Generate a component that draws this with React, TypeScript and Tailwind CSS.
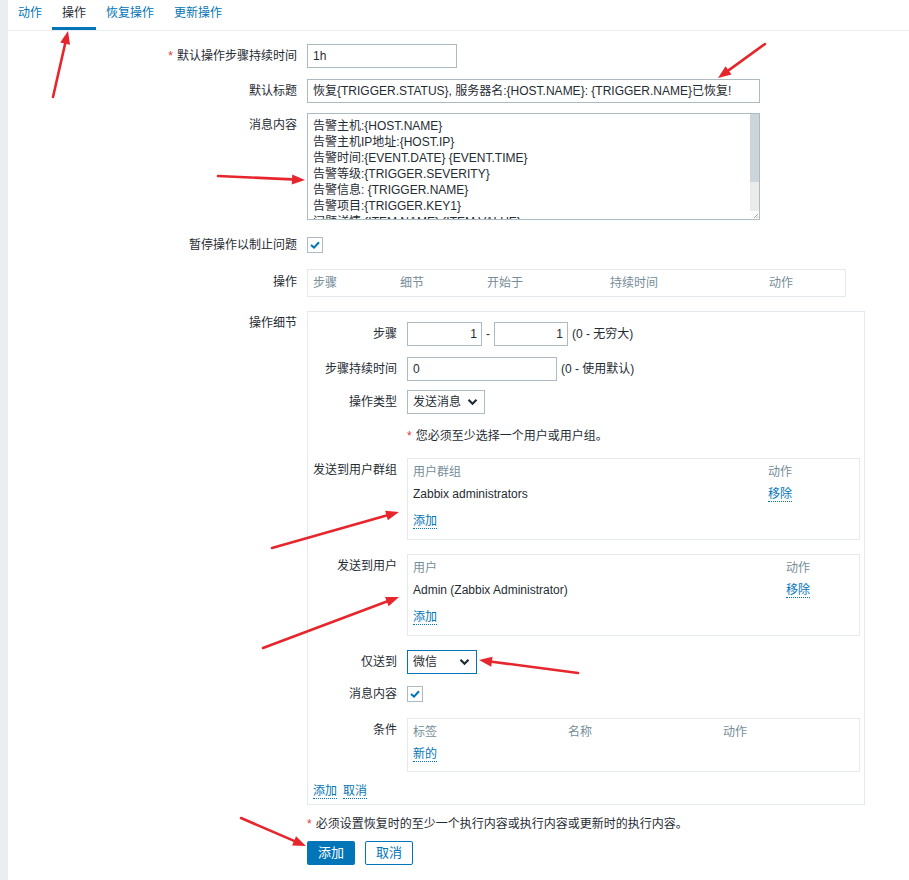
import React from "react";

const FONT = { fontFamily: '"Liberation Sans", "Noto Sans CJK SC", sans-serif' };

type Arrow = { x1: number; y1: number; x2: number; y2: number };

const ARROWS: Arrow[] = [
  { x1: 53, y1: 97, x2: 68, y2: 31 },
  { x1: 765, y1: 44, x2: 718, y2: 78 },
  { x1: 218, y1: 176, x2: 305, y2: 180 },
  { x1: 272, y1: 548, x2: 399, y2: 512 },
  { x1: 263, y1: 648, x2: 399, y2: 597 },
  { x1: 578, y1: 673, x2: 479, y2: 660 },
  { x1: 241, y1: 818, x2: 306, y2: 846 },
];

function RedArrow({ x1, y1, x2, y2 }: Arrow) {
  const dx = x2 - x1;
  const dy = y2 - y1;
  const len = Math.hypot(dx, dy);
  const ux = dx / len;
  const uy = dy / len;
  const head = 13;
  const half = 5;
  const bx = x2 - ux * head;
  const by = y2 - uy * head;
  const pts = `${x2},${y2} ${bx - uy * half},${by + ux * half} ${bx + uy * half},${by - ux * half}`;
  return (
    <g>
      <line x1={x1} y1={y1} x2={bx} y2={by} stroke="#e6262c" strokeWidth={2.6} strokeLinecap="round" />
      <polygon points={pts} fill="#e6262c" />
    </g>
  );
}

function Check() {
  return (
    <div className="w-[16px] h-[16px] border border-[#acbbc2] bg-white flex items-center justify-center">
      <svg width="10" height="8" viewBox="0 0 10 8">
        <path d="M1 4 L4 6.6 L9 1.2" fill="none" stroke="#0275b8" strokeWidth="2" />
      </svg>
    </div>
  );
}

function Chevron() {
  return (
    <svg width="11" height="8" viewBox="0 0 11 8">
      <path d="M1.5 1.8 L5.5 5.8 L9.5 1.8" fill="none" stroke="#1f2c33" strokeWidth="2.2" />
    </svg>
  );
}

function Link({ children }: { children: React.ReactNode }) {
  return <span className="text-[#0275b8] border-b border-dotted border-[#0275b8] leading-[14px]">{children}</span>;
}

function Row({ label, star, labelClass, children, className }: { label: string; star?: boolean; labelClass?: string; children: React.ReactNode; className?: string }) {
  return (
    <div className={`flex items-start ${className ?? ""}`}>
      <div className={`w-[289px] shrink-0 text-right text-[#1f2c33] ${labelClass ?? "leading-[24px]"}`}>
        {star && <span className="text-[#e33734] mr-[4px]">*</span>}
        {label}
      </div>
      <div className="ml-[10px]">{children}</div>
    </div>
  );
}

function InnerRow({ label, children, className, labelClass }: { label: string; children: React.ReactNode; className?: string; labelClass?: string }) {
  return (
    <div className={`flex items-start ${className ?? ""}`}>
      <div className={`w-[84px] shrink-0 text-right text-[#1f2c33] whitespace-nowrap ${labelClass ?? "leading-[24px]"}`}>{label}</div>
      <div className="ml-[10px]">{children}</div>
    </div>
  );
}

const MESSAGE = [
  "告警主机:{HOST.NAME}",
  "告警主机IP地址:{HOST.IP}",
  "告警时间:{EVENT.DATE} {EVENT.TIME}",
  "告警等级:{TRIGGER.SEVERITY}",
  "告警信息: {TRIGGER.NAME}",
  "告警项目:{TRIGGER.KEY1}",
  "问题详情:{ITEM.NAME}:{ITEM.VALUE}",
];

function ListTable({ head, col, name }: { head: string; col: string; name: string }) {
  return (
    <div className="w-[453px] h-[82px] border border-[#e6e9eb] px-[5px] pt-[4px]">
      <div className={`grid ${col} leading-[18px] text-[#768d99]`}>
        <span>{head}</span>
        <span>动作</span>
      </div>
      <div className={`grid ${col} leading-[18px] mt-[4px] text-[#1f2c33]`}>
        <span>{name}</span>
        <span>
          <Link>移除</Link>
        </span>
      </div>
      <div className="mt-[9px] leading-[18px]">
        <Link>添加</Link>
      </div>
    </div>
  );
}

export default function App() {
  return (
    <div className="relative w-[909px] h-[880px] bg-white flex text-[12px] overflow-hidden" style={FONT}>
      <div className="w-[8px] shrink-0 bg-[#ebeef0]" />
      <div className="flex-1">
        {/* Tabs */}
        <div className="flex h-[31px] border-b border-[#ebeef0]">
          <div className="px-[10px] pt-[6px] text-[#0275b8] leading-[14px]">动作</div>
          <div className="px-[10px] pt-[6px] text-[#1f2c33] leading-[14px] h-[30px] border-b-[3px] border-[#0275b8]">操作</div>
          <div className="px-[10px] pt-[6px] text-[#0275b8] leading-[14px]">恢复操作</div>
          <div className="px-[10px] pt-[6px] text-[#0275b8] leading-[14px]">更新操作</div>
        </div>

        {/* Form */}
        <div className="pt-[13px]">
          <Row label="默认操作步骤持续时间" star>
            <div className="w-[150px] h-[24px] border border-[#acbbc2] px-[5px] leading-[22px] text-[#1f2c33]">1h</div>
          </Row>

          <Row label="默认标题" className="mt-[11px]">
            <div className="w-[453px] h-[24px] border border-[#acbbc2] px-[5px] leading-[22px] text-[#1f2c33] whitespace-nowrap overflow-hidden">
              恢复{"{TRIGGER.STATUS}"}, 服务器名:{"{HOST.NAME}"}: {"{TRIGGER.NAME}"}已恢复!
            </div>
          </Row>

          <Row label="消息内容" className="mt-[10px]">
            <div className="w-[453px] h-[107px] border border-[#acbbc2] flex overflow-hidden">
              <div className="flex-1 px-[5px] pt-[4px] leading-[16px] text-[#1f2c33] overflow-hidden">
                {MESSAGE.map((l) => (
                  <div key={l} className="whitespace-nowrap">
                    {l}
                  </div>
                ))}
              </div>
              <div className="w-[9px] flex flex-col">
                <div className="h-[68px] bg-[#ccd5da]" />
                <div className="flex-1 bg-[#ebebeb]" />
                <div className="h-[8px] bg-white flex items-end justify-end">
                  <svg width="6" height="6" viewBox="0 0 6 6">
                    <path d="M5 1 L1 5 M5 3.5 L3.5 5" stroke="#888" strokeWidth="0.8" />
                  </svg>
                </div>
              </div>
            </div>
          </Row>

          <Row label="暂停操作以制止问题" className="mt-[13px]">
            <div className="h-[24px] flex items-center">
              <Check />
            </div>
          </Row>

          <Row label="操作" className="mt-[12px]" labelClass="leading-[26px]">
            <div className="w-[539px] h-[28px] border border-[#e6e9eb] px-[5px] grid grid-cols-[87px_87px_123px_159px_1fr] items-center text-[#768d99]">
              <span>步骤</span>
              <span>细节</span>
              <span>开始于</span>
              <span>持续时间</span>
              <span>动作</span>
            </div>
          </Row>

          <Row label="操作细节" className="mt-[14px]">
            <div className="w-[558px] border border-[#e6e9eb] px-[5px] pt-[10px] pb-[5px]">
              <InnerRow label="步骤">
                <div className="flex items-center h-[24px] text-[#1f2c33]">
                  <div className="w-[75px] h-[24px] border border-[#acbbc2] px-[4px] text-right leading-[22px]">1</div>
                  <span className="mx-[4px]">-</span>
                  <div className="w-[74px] h-[24px] border border-[#acbbc2] px-[4px] text-right leading-[22px]">1</div>
                  <span className="ml-[4px]">(0 - 无穷大)</span>
                </div>
              </InnerRow>

              <InnerRow label="步骤持续时间" className="mt-[11px]">
                <div className="flex items-center h-[24px] text-[#1f2c33]">
                  <div className="w-[150px] h-[24px] border border-[#acbbc2] px-[5px] leading-[22px]">0</div>
                  <span className="ml-[4px]">(0 - 使用默认)</span>
                </div>
              </InnerRow>

              <InnerRow label="操作类型" className="mt-[9px]">
                <div className="w-[78px] h-[24px] border border-[#acbbc2] pl-[5px] pr-[6px] flex items-center justify-between text-[#1f2c33]">
                  <span>发送消息</span>
                  <Chevron />
                </div>
              </InnerRow>

              <InnerRow label="" className="mt-[10px]">
                <div className="leading-[24px] text-[#1f2c33]">
                  <span className="text-[#e33734] mr-[4px]">*</span>您必须至少选择一个用户或用户组。
                </div>
              </InnerRow>

              <InnerRow label="发送到用户群组" className="mt-[10px]" labelClass="leading-[24px]">
                <ListTable head="用户群组" col="grid-cols-[355px_1fr]" name="Zabbix administrators" />
              </InnerRow>

              <InnerRow label="发送到用户" className="mt-[14px]" labelClass="leading-[24px]">
                <ListTable head="用户" col="grid-cols-[373px_1fr]" name="Admin (Zabbix Administrator)" />
              </InnerRow>

              <InnerRow label="仅送到" className="mt-[14px]">
                <div className="w-[70px] h-[24px] border border-[#0275b8] pl-[5px] pr-[6px] flex items-center justify-between text-[#1f2c33]">
                  <span>微信</span>
                  <Chevron />
                </div>
              </InnerRow>

              <InnerRow label="消息内容" className="mt-[8px]">
                <div className="h-[24px] flex items-center">
                  <Check />
                </div>
              </InnerRow>

              <InnerRow label="条件" className="mt-[12px]">
                <div className="w-[453px] h-[54px] border border-[#e6e9eb] px-[5px] pt-[4px]">
                  <div className="grid grid-cols-[155px_155px_1fr] leading-[18px] text-[#768d99]">
                    <span>标签</span>
                    <span>名称</span>
                    <span>动作</span>
                  </div>
                  <div className="mt-[4px] leading-[18px]">
                    <Link>新的</Link>
                  </div>
                </div>
              </InnerRow>

              <div className="mt-[12px] leading-[18px] flex gap-[6px]">
                <Link>添加</Link>
                <Link>取消</Link>
              </div>
            </div>
          </Row>

          <Row label="" className="mt-[11px]" labelClass="leading-[16px]">
            <div className="leading-[16px] text-[#1f2c33]">
              <span className="text-[#e33734] mr-[4px]">*</span>必须设置恢复时的至少一个执行内容或执行内容或更新时的执行内容。
            </div>
          </Row>

          <Row label="" className="mt-[9px]">
            <div className="flex gap-[10px]">
              <button className="w-[48px] h-[24px] bg-[#0275b8] text-white rounded-[2px] text-[13px]">添加</button>
              <button className="w-[48px] h-[24px] border border-[#0275b8] text-[#0275b8] bg-white rounded-[2px] text-[13px]">取消</button>
            </div>
          </Row>
        </div>
      </div>

      <svg className="absolute inset-0 pointer-events-none" width="909" height="880">
        {ARROWS.map((a, i) => (
          <RedArrow key={i} {...a} />
        ))}
      </svg>
    </div>
  );
}
